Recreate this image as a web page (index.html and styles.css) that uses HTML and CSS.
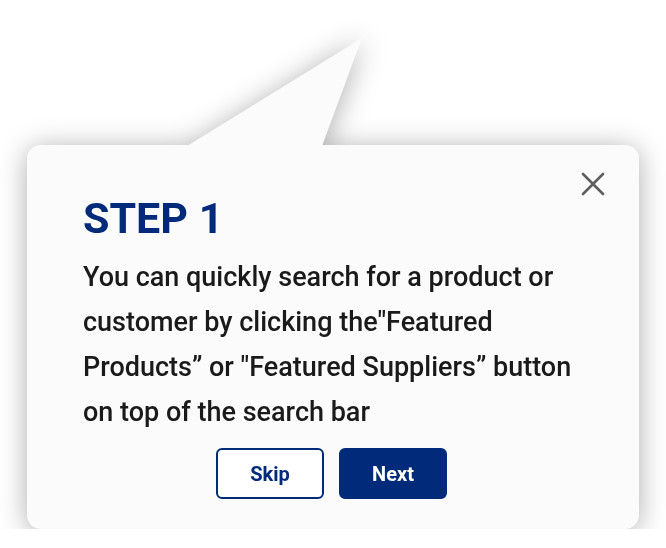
FILE: index.html
```html
<!DOCTYPE html>
<html>
<head>
    <title>Guide - Step 1</title>
    <link rel="stylesheet" href="styles.css">
</head>
<body>

<div class="tour">
    <div class="bubble">
        <svg class="pointer" width="176" height="110" viewBox="0 0 176 110">
            <polygon points="0,110 175,2 135,110" fill="#fbfbfb"/>
        </svg>
        <button class="close-button" aria-label="Close">
            <svg width="24" height="24" viewBox="0 0 24 24">
                <path d="M2 2 L22 22 M22 2 L2 22" stroke="#5f5f5f" stroke-width="2.6" stroke-linecap="round"/>
            </svg>
        </button>

        <h1 class="step-title">STEP 1</h1>
        <p class="step-text">You can quickly search for a product or customer by clicking the"Featured Products” or "Featured Suppliers” button on top of the search bar</p>

        <div class="step-actions">
            <button class="btn btn-outline">Skip</button>
            <button class="btn btn-primary">Next</button>
        </div>
    </div>
</div>

</body>
</html>
```

FILE: styles.css
```css
:root {
    --brand: #012a7a;
    --bubble-bg: #fbfbfb;
    --text-color: #1a1a1a;
    --close-color: #5f5f5f;
}

body {
    margin: 0;
    background-color: #ffffff;
    font-family: Roboto, "Noto Sans", sans-serif;
}

.tour {
    padding: 145px 27px 0 27px;
    filter: drop-shadow(0 3px 14px rgba(0, 0, 0, 0.32));
}

.bubble {
    position: relative;
    width: 612px;
    height: 384px;
    box-sizing: border-box;
    padding: 51px 50px 30px 56px;
    background-color: var(--bubble-bg);
    border-radius: 14px;
    display: flex;
    flex-direction: column;
}

.pointer {
    position: absolute;
    left: 160px;
    top: -109px;
}

.close-button {
    position: absolute;
    right: 34px;
    top: 27px;
    width: 24px;
    height: 24px;
    padding: 0;
    border: none;
    background: none;
    cursor: pointer;
}

.close-button svg {
    display: block;
}

.step-title {
    margin: 0;
    font-size: 43px;
    line-height: 45px;
    font-weight: 700;
    color: var(--brand);
}

.step-text {
    margin: 14px 0 0 0;
    font-size: 27px;
    line-height: 45px;
    font-weight: 500;
    color: var(--text-color);
}

.step-actions {
    margin-top: auto;
    display: flex;
    justify-content: center;
    gap: 15px;
    padding-right: 9px;
}

.btn {
    width: 108px;
    height: 51px;
    box-sizing: border-box;
    border-radius: 6px;
    font-family: Roboto, "Noto Sans", sans-serif;
    font-size: 20px;
    font-weight: 700;
    cursor: pointer;
}

.btn-outline {
    background-color: #ffffff;
    border: 2px solid var(--brand);
    color: var(--brand);
}

.btn-primary {
    background-color: var(--brand);
    border: 2px solid var(--brand);
    color: #ffffff;
}
```
